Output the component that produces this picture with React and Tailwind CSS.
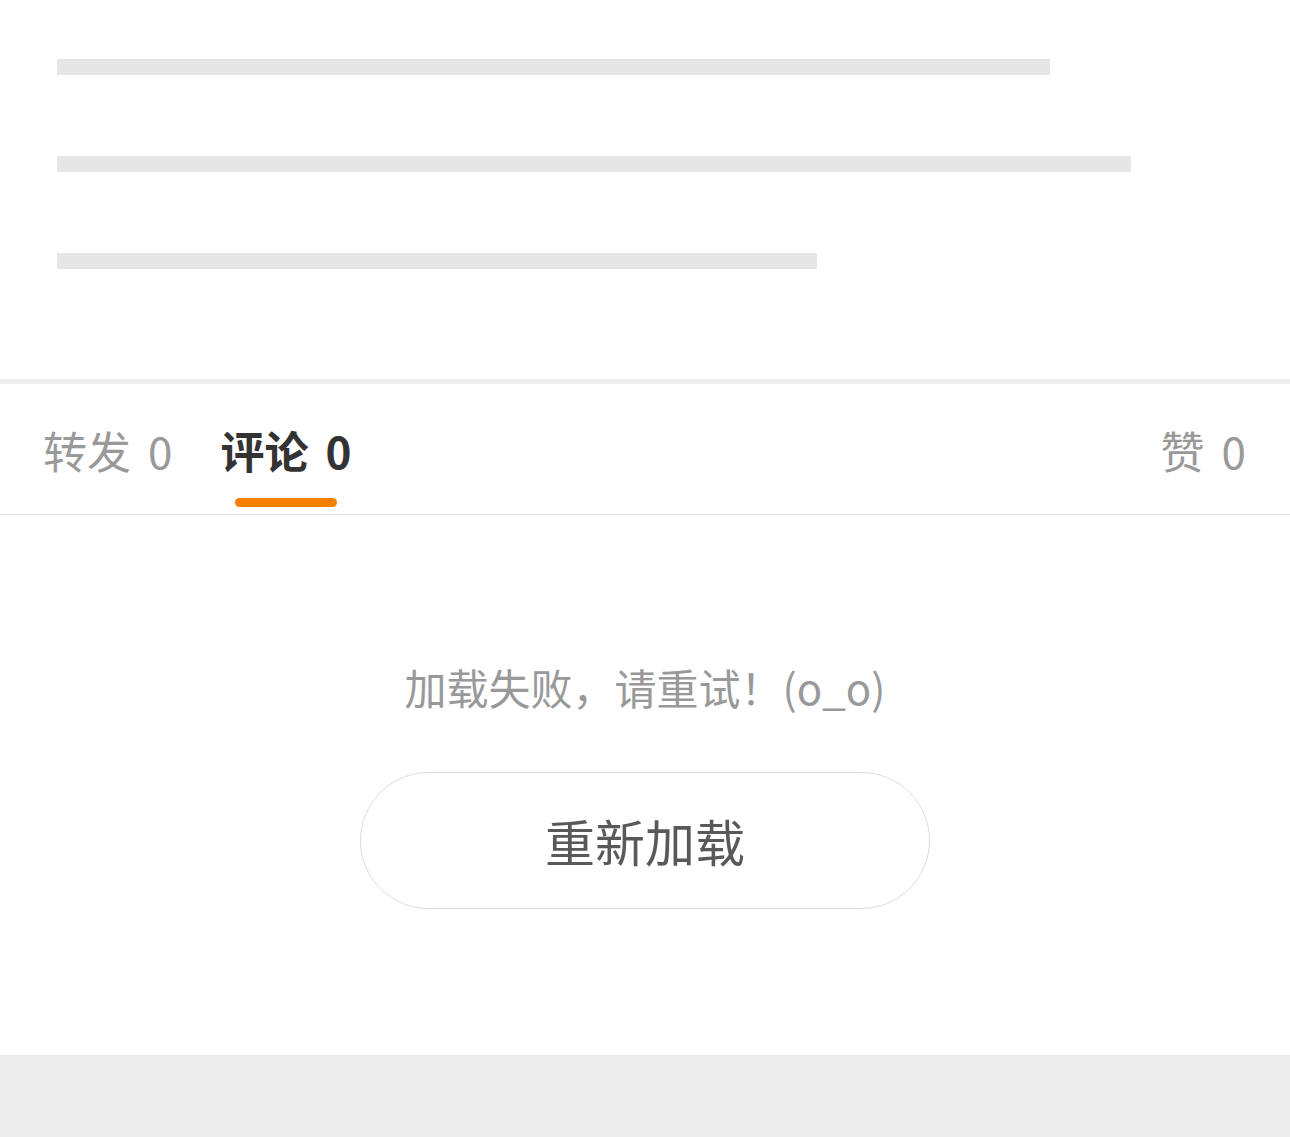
const cjk = { fontFamily: '"Noto Sans CJK SC", "Noto Sans", sans-serif' };

const skeleton = ['w-[993px]', 'w-[1074px]', 'w-[760px]'];

const Tab = ({ label, count, active }) => (
  <div className="flex flex-col items-center">
    <span
      className={`flex text-[44px] leading-[60px] ${active ? 'font-bold text-[#333333]' : 'text-[#999999]'}`}
    >
      <span>{label}</span>
      <span className="ml-[17px]">{count}</span>
    </span>
    {active && <span className="mt-[18px] h-[9px] w-[102px] rounded-full bg-[#f78000]" />}
  </div>
);

export default function App() {
  return (
    <div className="flex min-h-[1137px] w-full flex-col bg-white" style={cjk}>
      {/* placeholder lines */}
      <div className="flex flex-col gap-[81px] px-[57px] pt-[59px] pb-[110px]">
        {skeleton.map((w, i) => (
          <div key={i} className={`h-[16px] ${w} bg-[#e6e6e6]`} />
        ))}
      </div>

      <div className="h-[5px] bg-[#efefef]" />

      {/* tabs */}
      <div className="flex h-[131px] items-start justify-between border-b border-[#e6e6e6] pt-[36px] pl-[43px] pr-[44px]">
        <div className="flex gap-[48px]">
          <Tab label="转发" count={0} />
          <Tab label="评论" count={0} active />
        </div>
        <Tab label="赞" count={0} />
      </div>

      {/* error state */}
      <div className="flex flex-col items-center pt-[146px] pb-[146px]">
        <p className="text-[42px] leading-[52px] text-[#999999]">加载失败，请重试！(o_o)</p>
        <button className="mt-[59px] flex h-[137px] w-[570px] items-center justify-center rounded-full border border-[#dcdcdc] bg-white text-[50px] text-[#595959]">
          重新加载
        </button>
      </div>

      <div className="flex-1 bg-[#ededed]" />
    </div>
  );
}
